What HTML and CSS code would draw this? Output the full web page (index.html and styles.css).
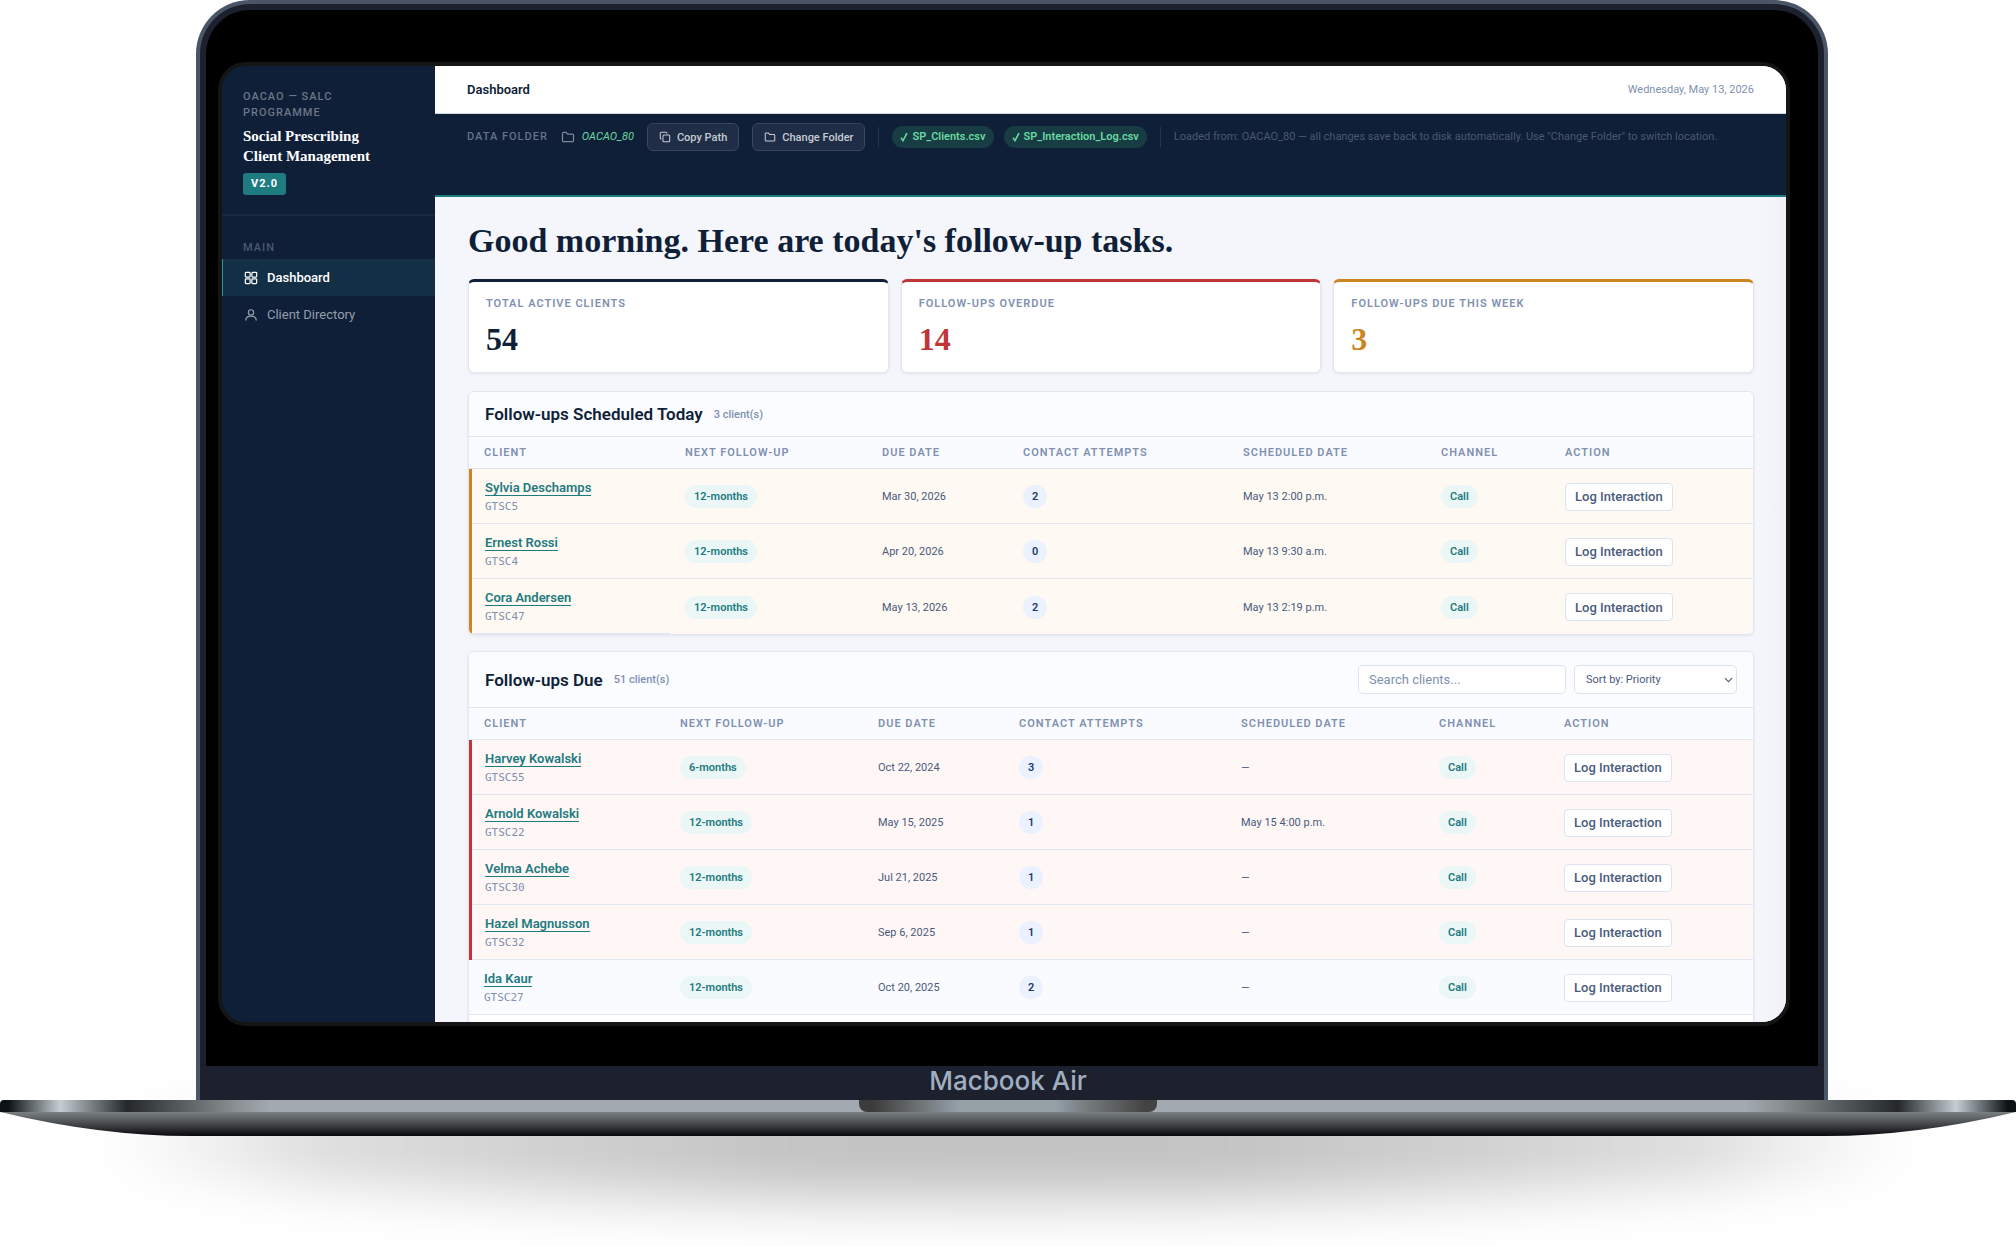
FILE: index.html
```html
<!DOCTYPE html>
<html lang="en">
<head>
  <meta charset="UTF-8">
  <meta name="viewport" content="width=device-width, initial-scale=1.0">
  <title>Social Prescribing Client Management</title>
  <link rel="stylesheet" href="styles.css">
</head>
<body>
  <!-- Shared icons -->
  <svg class="sprite" aria-hidden="true">
    <symbol id="icon-folder" viewBox="0 0 16 16">
      <path d="M1.7 12.2V3.8c0-.7.5-1.2 1.2-1.2h3l1.6 2h5.6c.7 0 1.2.5 1.2 1.2v6.4c0 .7-.5 1.2-1.2 1.2H2.9c-.7 0-1.2-.5-1.2-1.2z"/>
    </symbol>
    <symbol id="icon-copy" viewBox="0 0 16 16">
      <rect x="5.3" y="5.3" width="9" height="9" rx="1.3"/>
      <path d="M3.4 10.7H3c-.7 0-1.3-.6-1.3-1.3V3c0-.7.6-1.3 1.3-1.3h6.4c.7 0 1.3.6 1.3 1.3v.4"/>
    </symbol>
    <symbol id="icon-grid" viewBox="0 0 16 16">
      <rect x="1.5" y="1.5" width="5.5" height="5.5" rx="1"/>
      <rect x="9" y="1.5" width="5.5" height="5.5" rx="1"/>
      <rect x="1.5" y="9" width="5.5" height="5.5" rx="1"/>
      <rect x="9" y="9" width="5.5" height="5.5" rx="1"/>
    </symbol>
    <symbol id="icon-user" viewBox="0 0 16 16">
      <circle cx="8" cy="5" r="3"/>
      <path d="M2 14.2c0-3 2.6-4.9 6-4.9s6 1.9 6 4.9"/>
    </symbol>
  </svg>

  <div class="laptop">
    <div class="lid">
      <div class="bezel">
        <div class="screen">

          <!-- Sidebar -->
          <aside class="sidebar">
            <div class="brand">
              <div class="brand-org">OACAO — SALC<br>Programme</div>
              <div class="brand-name">Social Prescribing<br>Client Management</div>
              <span class="version">V2.0</span>
            </div>
            <nav class="nav">
              <div class="nav-label">Main</div>
              <a class="nav-item active" href="#dashboard">
                <svg class="icon"><use href="#icon-grid"/></svg>Dashboard
              </a>
              <a class="nav-item" href="#clients">
                <svg class="icon"><use href="#icon-user"/></svg>Client Directory
              </a>
            </nav>
          </aside>

          <div class="main">
            <header class="topbar">
              <div class="topbar-title">Dashboard</div>
              <div class="topbar-date">Wednesday, May 13, 2026</div>
            </header>

            <!-- Data folder bar -->
            <div class="databar">
              <span class="databar-label">Data Folder</span>
              <span class="folder">
                <svg class="icon"><use href="#icon-folder"/></svg>
                <em>OACAO_80</em>
              </span>
              <button class="btn-dark" type="button"><svg class="icon"><use href="#icon-copy"/></svg>Copy Path</button>
              <button class="btn-dark" type="button"><svg class="icon"><use href="#icon-folder"/></svg>Change Folder</button>
              <span class="divider"></span>
              <div class="files">
                <span class="file"><svg class="tick" viewBox="0 0 8 10"><path d="M1 5.8 3 8.6 7 1.2"/></svg>SP_Clients.csv</span>
                <span class="file"><svg class="tick" viewBox="0 0 8 10"><path d="M1 5.8 3 8.6 7 1.2"/></svg>SP_Interaction_Log.csv</span>
              </div>
              <span class="divider"></span>
              <span class="databar-note">Loaded from: OACAO_80 — all changes save back to disk automatically. Use "Change Folder" to switch location.</span>
            </div>

            <main class="content" id="dashboard">
              <h1>Good morning. Here are today's follow-up tasks.</h1>

              <section class="stats">
                <div class="stat">
                  <div class="stat-label">Total Active Clients</div>
                  <div class="stat-value">54</div>
                </div>
                <div class="stat stat-red">
                  <div class="stat-label">Follow-ups Overdue</div>
                  <div class="stat-value">14</div>
                </div>
                <div class="stat stat-amber">
                  <div class="stat-label">Follow-ups Due This Week</div>
                  <div class="stat-value">3</div>
                </div>
              </section>

              <section class="panel">
                <div class="panel-head">
                  <h2>Follow-ups Scheduled Today</h2>
                  <span class="count">3 client(s)</span>
                </div>
                <table class="table-today">
                  <colgroup><col class="c-client"><col class="c-next"><col class="c-due"><col class="c-attempts"><col class="c-sched"><col class="c-channel"><col></colgroup>
                  <thead>
                    <tr><th>Client</th><th>Next Follow-up</th><th>Due Date</th><th>Contact Attempts</th><th>Scheduled Date</th><th>Channel</th><th>Action</th></tr>
                  </thead>
                  <tbody>
                    <tr class="today">
                      <td><a class="client" href="#GTSC5">Sylvia Deschamps</a><div class="client-id">GTSC5</div></td>
                      <td><span class="pill">12-months</span></td>
                      <td>Mar 30, 2026</td>
                      <td><span class="pill pill-num">2</span></td>
                      <td>May 13 2:00 p.m.</td>
                      <td><span class="pill">Call</span></td>
                      <td><button class="btn" type="button">Log Interaction</button></td>
                    </tr>
                    <tr class="today">
                      <td><a class="client" href="#GTSC4">Ernest Rossi</a><div class="client-id">GTSC4</div></td>
                      <td><span class="pill">12-months</span></td>
                      <td>Apr 20, 2026</td>
                      <td><span class="pill pill-num">0</span></td>
                      <td>May 13 9:30 a.m.</td>
                      <td><span class="pill">Call</span></td>
                      <td><button class="btn" type="button">Log Interaction</button></td>
                    </tr>
                    <tr class="today">
                      <td><a class="client" href="#GTSC47">Cora Andersen</a><div class="client-id">GTSC47</div></td>
                      <td><span class="pill">12-months</span></td>
                      <td>May 13, 2026</td>
                      <td><span class="pill pill-num">2</span></td>
                      <td>May 13 2:19 p.m.</td>
                      <td><span class="pill">Call</span></td>
                      <td><button class="btn" type="button">Log Interaction</button></td>
                    </tr>
                  </tbody>
                </table>
              </section>

              <section class="panel">
                <div class="panel-head">
                  <h2>Follow-ups Due</h2>
                  <span class="count">51 client(s)</span>
                  <div class="tools">
                    <input class="search" type="text" placeholder="Search clients..." aria-label="Search clients">
                    <select class="sort" aria-label="Sort clients">
                      <option>Sort by: Priority</option>
                      <option>Sort by: Due Date</option>
                      <option>Sort by: Name</option>
                    </select>
                  </div>
                </div>
                <table class="table-due">
                  <colgroup><col class="c-client"><col class="c-next"><col class="c-due"><col class="c-attempts"><col class="c-sched"><col class="c-channel"><col></colgroup>
                  <thead>
                    <tr><th>Client</th><th>Next Follow-up</th><th>Due Date</th><th>Contact Attempts</th><th>Scheduled Date</th><th>Channel</th><th>Action</th></tr>
                  </thead>
                  <tbody>
                    <tr class="overdue">
                      <td><a class="client" href="#GTSC55">Harvey Kowalski</a><div class="client-id">GTSC55</div></td>
                      <td><span class="pill">6-months</span></td>
                      <td>Oct 22, 2024</td>
                      <td><span class="pill pill-num">3</span></td>
                      <td>—</td>
                      <td><span class="pill">Call</span></td>
                      <td><button class="btn" type="button">Log Interaction</button></td>
                    </tr>
                    <tr class="overdue">
                      <td><a class="client" href="#GTSC22">Arnold Kowalski</a><div class="client-id">GTSC22</div></td>
                      <td><span class="pill">12-months</span></td>
                      <td>May 15, 2025</td>
                      <td><span class="pill pill-num">1</span></td>
                      <td>May 15 4:00 p.m.</td>
                      <td><span class="pill">Call</span></td>
                      <td><button class="btn" type="button">Log Interaction</button></td>
                    </tr>
                    <tr class="overdue">
                      <td><a class="client" href="#GTSC30">Velma Achebe</a><div class="client-id">GTSC30</div></td>
                      <td><span class="pill">12-months</span></td>
                      <td>Jul 21, 2025</td>
                      <td><span class="pill pill-num">1</span></td>
                      <td>—</td>
                      <td><span class="pill">Call</span></td>
                      <td><button class="btn" type="button">Log Interaction</button></td>
                    </tr>
                    <tr class="overdue">
                      <td><a class="client" href="#GTSC32">Hazel Magnusson</a><div class="client-id">GTSC32</div></td>
                      <td><span class="pill">12-months</span></td>
                      <td>Sep 6, 2025</td>
                      <td><span class="pill pill-num">1</span></td>
                      <td>—</td>
                      <td><span class="pill">Call</span></td>
                      <td><button class="btn" type="button">Log Interaction</button></td>
                    </tr>
                    <tr class="hovered">
                      <td><a class="client" href="#GTSC27">Ida Kaur</a><div class="client-id">GTSC27</div></td>
                      <td><span class="pill">12-months</span></td>
                      <td>Oct 20, 2025</td>
                      <td><span class="pill pill-num">2</span></td>
                      <td>—</td>
                      <td><span class="pill">Call</span></td>
                      <td><button class="btn" type="button">Log Interaction</button></td>
                    </tr>
                    <tr><td colspan="7"></td></tr>
                  </tbody>
                </table>
              </section>
            </main>
          </div>

        </div>
      </div>
      <div class="chin">Macbook Air</div>
    </div>

    <!-- Laptop base -->
    <div class="deck"><div class="notch"></div></div>
    <svg class="base" viewBox="0 0 2016 24" preserveAspectRatio="none" aria-hidden="true">
      <defs>
        <linearGradient id="base-fill" x1="0" y1="0" x2="0" y2="1">
          <stop offset="0" stop-color="#7b8183"/>
          <stop offset="0.5" stop-color="#45484b"/>
          <stop offset="1" stop-color="#08080b"/>
        </linearGradient>
      </defs>
      <path d="M0 0H2016Q1916 24 1826 24H190Q100 24 0 0Z" fill="url(#base-fill)"/>
    </svg>
    <div class="ground"></div>
  </div>
</body>
</html>
```
FILE: styles.css
```css
* {
  margin: 0;
  padding: 0;
  box-sizing: border-box;
}

:root {
  --navy: #0f1f38;
  --teal: #1e7b80;
  --red: #c03538;
  --amber: #cc8420;
  --line: #e2e6f0;
  --muted: #8091b0;
  --text: #4a5b7c;
}

body {
  font-family: "Roboto", "Liberation Sans", sans-serif;
  font-size: 11px;
  color: var(--text);
  background: #fff;
  overflow: hidden;
}

a {
  color: inherit;
  text-decoration: none;
}

button, input, select {
  font-family: inherit;
}

.sprite {
  display: none;
}

.icon {
  flex: none;
  width: 14px;
  height: 14px;
  fill: none;
  stroke: currentColor;
  stroke-width: 1.4;
}

/* Laptop */
.laptop {
  position: relative;
  min-height: 100vh;
  overflow: hidden;
}

.lid {
  position: relative;
  z-index: 1;
  margin: 0 188px 0 196px;
  padding: 6px 6px 0;
  background: #1c212d;
  border: 4px solid #4a5568;
  border-bottom: 0;
  border-radius: 54px 54px 0 0;
}

.bezel {
  padding: 52px 28px 40px 12px;
  background: #000;
  border-radius: 44px 44px 0 0;
}

.screen {
  display: flex;
  aspect-ratio: 1572 / 964;
  min-height: 0;
  overflow: hidden;
  background: var(--navy);
  border: 4px solid #151515;
  border-radius: 28px;
}

.chin {
  height: 34px;
  padding-right: 8px;
  font-family: "Inter", sans-serif;
  font-size: 26px;
  font-weight: 500;
  line-height: 30px;
  text-align: center;
  color: #a0aec0;
}

.deck {
  position: relative;
  z-index: 1;
  height: 12px;
  border-radius: 4px 4px 0 0;
  background: linear-gradient(90deg, #0c1114 0, #0c1114 8px, #c5cdd3 60px, #24282b 127px, #878d8f 232px, #a2a9b1 270px, #a2a9b1 calc(100% - 270px), #878d8f calc(100% - 232px), #24282b calc(100% - 118px), #c5cdd3 calc(100% - 60px), #0c1114 calc(100% - 8px));
}

.notch {
  width: 298px;
  height: 12px;
  margin: 0 auto;
  border-radius: 0 0 8px 8px;
  background: linear-gradient(90deg, #3c3c3c 5%, #7a8082 24%, #87909b 29%, #96a1a6 34%, #96a1a6 66%, #87909b 70%, #7a8082 75%, #434343 96%);
}

.base {
  position: relative;
  z-index: 1;
  display: block;
  width: 100%;
  height: 24px;
}

/* Soft shadow under the laptop */
.ground {
  position: absolute;
  right: 90px;
  bottom: 46px;
  left: 90px;
  height: 112px;
  background: linear-gradient(90deg, transparent, rgba(0, 0, 0, 0.15) 12%, rgba(0, 0, 0, 0.24) 38%, rgba(0, 0, 0, 0.24) 62%, rgba(0, 0, 0, 0.15) 88%, transparent);
  border-radius: 50%;
  filter: blur(28px);
}

/* Sidebar */
.sidebar {
  flex: none;
  width: 213px;
  color: #fff;
  background: var(--navy);
}

.brand {
  padding: 23px 21px 19px;
  border-bottom: 2px solid #18283f;
}

.brand-org {
  margin-bottom: 5px;
  font-size: 11px;
  font-weight: 500;
  line-height: 16px;
  letter-spacing: 1px;
  text-transform: uppercase;
  color: #6b7686;
}

.brand-name {
  margin-bottom: 7px;
  font-family: "Liberation Serif", serif;
  font-size: 15px;
  font-weight: 700;
  line-height: 20px;
}

.version {
  display: inline-block;
  padding: 0 8px;
  font-size: 11px;
  font-weight: 700;
  line-height: 22px;
  letter-spacing: 1px;
  background: var(--teal);
  border-radius: 3px;
}

.nav-label {
  padding: 24px 21px 3px;
  font-size: 11px;
  font-weight: 500;
  line-height: 16px;
  letter-spacing: 1px;
  text-transform: uppercase;
  color: #4a586c;
}

.nav-item {
  display: flex;
  align-items: center;
  gap: 9px;
  height: 37px;
  padding: 0 22px;
  font-size: 13px;
  color: #949dab;
}

.nav-item.active {
  font-weight: 500;
  color: #fff;
  background: #132f46;
  box-shadow: inset 1px 0 #2a9a9c;
}

/* Main column */
.main {
  flex: 1;
  display: flex;
  flex-direction: column;
  min-width: 0;
  overflow: hidden;
  background: #f4f6fb;
}

.topbar {
  flex: none;
  display: flex;
  align-items: center;
  justify-content: space-between;
  height: 48px;
  padding: 0 32px;
  background: #fff;
  border-bottom: 1px solid #d0d6e2;
}

.topbar-title {
  font-size: 13px;
  font-weight: 600;
  color: var(--navy);
}

.topbar-date {
  color: var(--muted);
}

.databar {
  flex: none;
  display: flex;
  align-items: flex-start;
  gap: 13px;
  height: 83px;
  padding: 9px 32px;
  line-height: 28px;
  white-space: nowrap;
  background: var(--navy);
  border-bottom: 2px solid var(--teal);
}

.databar-label {
  font-size: 11px;
  font-weight: 500;
  letter-spacing: 1px;
  text-transform: uppercase;
  color: #66718a;
}

.folder {
  display: flex;
  align-items: center;
  gap: 7px;
  color: #7d8797;
}

.folder em {
  color: #68d8a0;
}

.btn-dark {
  display: flex;
  align-items: center;
  gap: 6px;
  height: 28px;
  padding: 0 11px;
  font-size: 11px;
  font-weight: 500;
  color: #c6cbd4;
  background: #1f2d46;
  border: 1px solid #3a475c;
  border-radius: 6px;
}

.btn-dark .icon {
  width: 12px;
  height: 12px;
}

.divider {
  flex: none;
  width: 1px;
  height: 20px;
  margin-top: 4px;
  background: #26354b;
}

.files {
  display: flex;
  gap: 10px;
  padding-top: 3px;
}

.file {
  display: flex;
  align-items: center;
  gap: 4px;
  height: 22px;
  padding: 0 8px;
  font-weight: 600;
  line-height: 22px;
  color: #68d8a0;
  background: #183c44;
  border-radius: 11px;
}

.tick {
  width: 8px;
  height: 10px;
  fill: none;
  stroke: currentColor;
  stroke-width: 1.6;
}

.databar-note {
  color: #4b596d;
}

.content {
  flex: 1;
  min-height: 0;
  padding: 25px 32px 0 33px;
  background: linear-gradient(270deg, #eff1f6, #f4f6fb 24px);
}

h1 {
  margin-bottom: 19px;
  font-family: "Liberation Serif", serif;
  font-size: 34px;
  font-weight: 700;
  line-height: 38px;
  color: var(--navy);
}

/* Stat cards */
.stats {
  display: grid;
  grid-template-columns: repeat(3, 1fr);
  gap: 12px;
  margin-bottom: 18px;
}

.stat {
  padding: 14px 17px;
  color: var(--navy);
  background: #fff;
  border: 1px solid var(--line);
  border-top: 3px solid var(--navy);
  border-radius: 6px;
  box-shadow: 0 1px 3px rgba(15, 31, 56, 0.08);
}

.stat-red {
  color: var(--red);
  border-top-color: var(--red);
}

.stat-amber {
  color: var(--amber);
  border-top-color: var(--amber);
}

.stat-label {
  margin-bottom: 8px;
  font-size: 11px;
  font-weight: 600;
  line-height: 16px;
  letter-spacing: 1px;
  text-transform: uppercase;
  color: var(--muted);
}

.stat-value {
  font-family: "Liberation Serif", serif;
  font-size: 32px;
  font-weight: 700;
  line-height: 38px;
}

/* Panels and tables */
.panel {
  margin-bottom: 16px;
  overflow: hidden;
  background: #fff;
  border: 1px solid var(--line);
  border-radius: 6px;
  box-shadow: 0 1px 3px rgba(15, 31, 56, 0.08);
}

.panel-head {
  display: flex;
  align-items: center;
  gap: 11px;
  padding: 8px 16px;
  min-height: 45px;
  background: #fafcff;
  border-bottom: 1px solid var(--line);
}

h2 {
  font-size: 17px;
  font-weight: 600;
  line-height: 24px;
  color: var(--navy);
}

.count {
  font-size: 11px;
  font-weight: 500;
  color: var(--muted);
}

.tools {
  display: flex;
  gap: 8px;
  margin-left: auto;
  padding: 5px 0;
}

.search,
.sort {
  height: 29px;
  background: #fff;
  border: 1px solid #dde3ee;
  border-radius: 5px;
}

.search {
  width: 208px;
  padding: 0 10px;
  font-size: 13px;
}

.search::placeholder {
  color: var(--muted);
}

.sort {
  width: 163px;
  padding: 0 20px 0 11px;
  font-size: 11px;
  color: var(--text);
  appearance: none;
  background: #fff url("data:image/svg+xml,%3Csvg xmlns='http://www.w3.org/2000/svg' viewBox='0 0 10 6' fill='none' stroke='%234a5b7c' stroke-width='1.2'%3E%3Cpath d='M1 .8 5 4.8 9 .8'/%3E%3C/svg%3E") no-repeat right 3px center / 9px 6px;
}

table {
  width: 100%;
  table-layout: fixed;
  border-collapse: separate;
  border-spacing: 0;
}

.table-today .c-client { width: 201px; }
.table-today .c-next { width: 197px; }
.table-today .c-attempts { width: 220px; }
.table-today .c-channel { width: 124px; }

.table-due .c-client { width: 196px; }
.table-due .c-next { width: 198px; }
.table-due .c-attempts { width: 222px; }
.table-due .c-channel { width: 125px; }

.c-due { width: 141px; }
.c-sched { width: 198px; }

th {
  height: 32px;
  padding: 0 15px;
  font-size: 11px;
  font-weight: 600;
  letter-spacing: 1px;
  text-align: left;
  text-transform: uppercase;
  color: var(--muted);
  background: #fafbff;
  border-bottom: 1px solid var(--line);
}

td {
  height: 55px;
  padding: 1px 15px 0;
  border-bottom: 1px solid var(--line);
}

.table-today tr:last-child td {
  border-bottom: 0;
}

.today td {
  background: #fef9f2;
}

.overdue td {
  background: #fff6f6;
}

.hovered td {
  background: #fafbff;
}

/* the coloured edge runs unbroken, so the row line is an inset shadow here */
.today td:first-child,
.overdue td:first-child {
  padding-left: 13px;
  border-bottom: 0;
  box-shadow: inset 0 -1px var(--line);
}

.today td:first-child {
  border-left: 3px solid var(--amber);
}

.overdue td:first-child {
  border-left: 3px solid var(--red);
}

.client {
  display: inline-block;
  font-size: 13px;
  font-weight: 600;
  line-height: 15px;
  color: var(--teal);
  border-bottom: 1px solid var(--teal);
}

.client-id {
  margin-top: 4px;
  font-family: "DejaVu Sans Mono", monospace;
  font-size: 11px;
  line-height: 14px;
  color: var(--muted);
}

.pill {
  display: inline-block;
  padding: 0 9px;
  font-weight: 600;
  line-height: 23px;
  color: var(--teal);
  background: #ebf7f7;
  border-radius: 12px;
}

.pill-num {
  color: #1e3a6e;
  background: #ebf1ff;
}

.btn {
  height: 28px;
  padding: 0 9px;
  font-size: 13px;
  font-weight: 500;
  color: var(--text);
  background: #fff;
  border: 1px solid #dde3ee;
  border-radius: 4px;
}
```
